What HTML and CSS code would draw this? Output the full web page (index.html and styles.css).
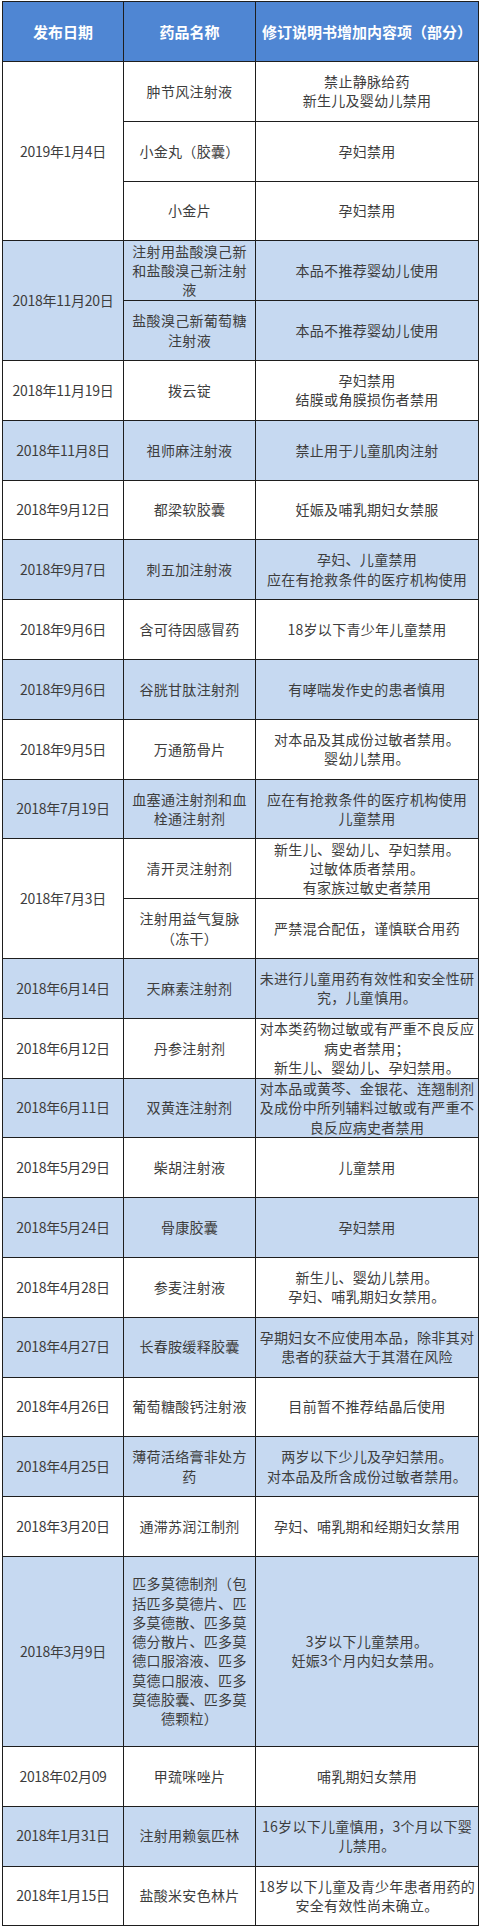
FILE: index.html
```html
<!DOCTYPE html>
<html lang="zh-CN">
<head>
<meta charset="utf-8">
<title>药品说明书修订</title>
<link rel="stylesheet" href="styles.css">
</head>
<body>
<div class="page">
<table class="drug-table">
  <colgroup>
    <col class="col-date">
    <col class="col-name">
    <col class="col-note">
  </colgroup>
  <thead>
    <tr class="head">
      <th>发布日期</th>
      <th>药品名称</th>
      <th>修订说明书增加内容项（部分）</th>
    </tr>
  </thead>
  <tbody>
    <tr class="row band-white">
      <td class="date" rowspan="3">2019年1月4日</td>
      <td>肿节风注射液</td>
      <td>禁止静脉给药<br>新生儿及婴幼儿禁用</td>
    </tr>
    <tr class="row band-white">
      <td>小金丸（胶囊）</td>
      <td>孕妇禁用</td>
    </tr>
    <tr class="row band-white">
      <td>小金片</td>
      <td>孕妇禁用</td>
    </tr>
    <tr class="row band-blue">
      <td class="date" rowspan="2">2018年11月20日</td>
      <td>注射用盐酸溴己新<br>和盐酸溴己新注射<br>液</td>
      <td>本品不推荐婴幼儿使用</td>
    </tr>
    <tr class="row band-blue">
      <td>盐酸溴己新葡萄糖<br>注射液</td>
      <td>本品不推荐婴幼儿使用</td>
    </tr>
    <tr class="row band-white">
      <td class="date">2018年11月19日</td>
      <td>拨云锭</td>
      <td>孕妇禁用<br>结膜或角膜损伤者禁用</td>
    </tr>
    <tr class="row band-blue">
      <td class="date">2018年11月8日</td>
      <td>祖师麻注射液</td>
      <td>禁止用于儿童肌肉注射</td>
    </tr>
    <tr class="row band-white">
      <td class="date">2018年9月12日</td>
      <td>都梁软胶囊</td>
      <td>妊娠及哺乳期妇女禁服</td>
    </tr>
    <tr class="row band-blue">
      <td class="date">2018年9月7日</td>
      <td>刺五加注射液</td>
      <td>孕妇、儿童禁用<br>应在有抢救条件的医疗机构使用</td>
    </tr>
    <tr class="row band-white">
      <td class="date">2018年9月6日</td>
      <td>含可待因感冒药</td>
      <td>18岁以下青少年儿童禁用</td>
    </tr>
    <tr class="row band-blue">
      <td class="date">2018年9月6日</td>
      <td>谷胱甘肽注射剂</td>
      <td>有哮喘发作史的患者慎用</td>
    </tr>
    <tr class="row band-white">
      <td class="date">2018年9月5日</td>
      <td>万通筋骨片</td>
      <td>对本品及其成份过敏者禁用。<br>婴幼儿禁用。</td>
    </tr>
    <tr class="row band-blue">
      <td class="date">2018年7月19日</td>
      <td>血塞通注射剂和血<br>栓通注射剂</td>
      <td>应在有抢救条件的医疗机构使用<br>儿童禁用</td>
    </tr>
    <tr class="row band-white">
      <td class="date" rowspan="2">2018年7月3日</td>
      <td>清开灵注射剂</td>
      <td>新生儿、婴幼儿、孕妇禁用。<br>过敏体质者禁用。<br>有家族过敏史者禁用</td>
    </tr>
    <tr class="row band-white">
      <td>注射用益气复脉<br>（冻干）</td>
      <td>严禁混合配伍，谨慎联合用药</td>
    </tr>
    <tr class="row band-blue">
      <td class="date">2018年6月14日</td>
      <td>天麻素注射剂</td>
      <td>未进行儿童用药有效性和安全性研<br>究，儿童慎用。</td>
    </tr>
    <tr class="row band-white">
      <td class="date">2018年6月12日</td>
      <td>丹参注射剂</td>
      <td>对本类药物过敏或有严重不良反应<br>病史者禁用；<br>新生儿、婴幼儿、孕妇禁用。</td>
    </tr>
    <tr class="row band-blue">
      <td class="date">2018年6月11日</td>
      <td>双黄连注射剂</td>
      <td>对本品或黄芩、金银花、连翘制剂<br>及成份中所列辅料过敏或有严重不<br>良反应病史者禁用</td>
    </tr>
    <tr class="row band-white">
      <td class="date">2018年5月29日</td>
      <td>柴胡注射液</td>
      <td>儿童禁用</td>
    </tr>
    <tr class="row band-blue">
      <td class="date">2018年5月24日</td>
      <td>骨康胶囊</td>
      <td>孕妇禁用</td>
    </tr>
    <tr class="row band-white">
      <td class="date">2018年4月28日</td>
      <td>参麦注射液</td>
      <td>新生儿、婴幼儿禁用。<br>孕妇、哺乳期妇女禁用。</td>
    </tr>
    <tr class="row band-blue">
      <td class="date">2018年4月27日</td>
      <td>长春胺缓释胶囊</td>
      <td>孕期妇女不应使用本品，除非其对<br>患者的获益大于其潜在风险</td>
    </tr>
    <tr class="row band-white">
      <td class="date">2018年4月26日</td>
      <td>葡萄糖酸钙注射液</td>
      <td>目前暂不推荐结晶后使用</td>
    </tr>
    <tr class="row band-blue">
      <td class="date">2018年4月25日</td>
      <td>薄荷活络膏非处方<br>药</td>
      <td>两岁以下少儿及孕妇禁用。<br>对本品及所含成份过敏者禁用。</td>
    </tr>
    <tr class="row band-white">
      <td class="date">2018年3月20日</td>
      <td>通滞苏润江制剂</td>
      <td>孕妇、哺乳期和经期妇女禁用</td>
    </tr>
    <tr class="row-tall band-blue">
      <td class="date">2018年3月9日</td>
      <td>匹多莫德制剂（包<br>括匹多莫德片、匹<br>多莫德散、匹多莫<br>德分散片、匹多莫<br>德口服溶液、匹多<br>莫德口服液、匹多<br>莫德胶囊、匹多莫<br>德颗粒）</td>
      <td>3岁以下儿童禁用。<br>妊娠3个月内妇女禁用。</td>
    </tr>
    <tr class="row band-white">
      <td class="date">2018年02月09</td>
      <td>甲巯咪唑片</td>
      <td>哺乳期妇女禁用</td>
    </tr>
    <tr class="row band-blue">
      <td class="date">2018年1月31日</td>
      <td>注射用赖氨匹林</td>
      <td>16岁以下儿童慎用，3个月以下婴<br>儿禁用。</td>
    </tr>
    <tr class="row band-white">
      <td class="date">2018年1月15日</td>
      <td>盐酸米安色林片</td>
      <td>18岁以下儿童及青少年患者用药的<br>安全有效性尚未确立。</td>
    </tr>
  </tbody>
</table>
</div>
</body>
</html>
```

FILE: styles.css
```css
html, body {
  margin: 0;
  padding: 0;
  background: #ffffff;
}

.page {
  padding: 1px 2px 0 2px;
}

.drug-table {
  width: 476px;
  border-collapse: collapse;
  table-layout: fixed;
  font-family: "Noto Sans CJK SC", "Noto Sans", sans-serif;
  font-size: 14px;
  color: #3d3d3d;
}

.col-date { width: 121px; }
.col-name { width: 132px; }
.col-note { width: 223px; }

.drug-table th,
.drug-table td {
  border: 1px solid #1e1e1e;
  text-align: center;
  vertical-align: middle;
  padding: 0 1px;
  line-height: 19.3px;
  white-space: nowrap;
  letter-spacing: 0.3px;
}

.drug-table th {
  background: #4f86d3;
  color: #ffffff;
  font-weight: bold;
  font-size: 15px;
  letter-spacing: 0;
}

.head { height: 60px; }
.row { height: 59.8px; }
.row-tall { height: 190px; }

.band-white { background: #ffffff; }
.band-blue { background: #c6d9f1; }

.drug-table td.date {
  letter-spacing: -0.3px;
}
```
